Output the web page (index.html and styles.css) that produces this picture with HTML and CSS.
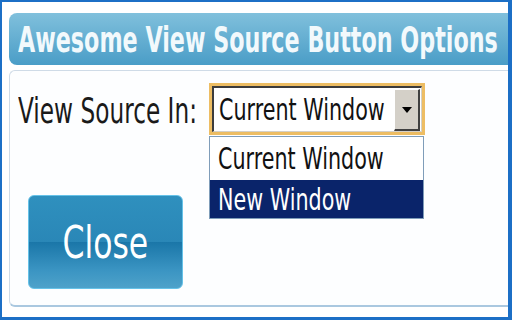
FILE: index.html
```html
<!DOCTYPE html>
<html>
<head>
<meta charset="utf-8">
<link rel="stylesheet" href="styles.css">
</head>
<body>
<div class="frame">
  <div class="header"><span class="title">Awesome View Source Button Options</span></div>
  <div class="panel">
    <div class="row">
      <div class="label"><span class="label-text">View Source In:</span></div>
      <div class="select">
        <div class="select-inner">
          <div class="select-value"><span class="sel-text">Current Window</span></div>
          <div class="select-btn"><span class="arrow"></span></div>
        </div>
        <div class="list">
          <div class="opt"><span class="sel-text">Current Window</span></div>
          <div class="opt opt-sel"><span class="sel-text">New Window</span></div>
        </div>
      </div>
    </div>
    <div class="close-btn"><span class="close-text">Close</span></div>
  </div>
</div>
</body>
</html>
```
FILE: styles.css
```css
html, body {
  margin: 0;
  padding: 0;
  overflow: hidden;
  background: #ffffff;
}
.frame {
  width: 512px;
  height: 320px;
  box-sizing: border-box;
  border-left: 2px solid #1c6fc6;
  border-top: 2px solid #1c6fc6;
  border-right: 4px solid #1c6fc6;
  border-bottom: 3px solid #1c6fc6;
  padding: 11px 0 0 7px;
  background: #ffffff;
  font-family: "DejaVu Sans", Verdana, sans-serif;
  overflow: hidden;
}
.header {
  height: 50px;
  padding-top: 2px;
  padding-left: 9px;
  border-radius: 8px 0 0 8px;
  background: linear-gradient(#80c0dc, #4a9dc7);
  white-space: nowrap;
  overflow: hidden;
}
.title {
  display: inline-block;
  font-size: 36px;
  line-height: 50px;
  font-weight: bold;
  color: #f2f9fc;
  transform: scaleX(0.618);
  transform-origin: left center;
}
.panel {
  margin-top: 5px;
  height: 237px;
  box-sizing: border-box;
  border: 1px solid #cfdbe7;
  border-right: none;
  border-bottom: 2px solid #aac8e0;
  border-radius: 6px 0 0 6px;
  background: #fdfeff;
  padding: 12px 0 0 8px;
  position: relative;
}
.row {
  display: flex;
  align-items: flex-start;
  height: 58px;
}
.label {
  width: 191px;
  flex: none;
  margin-top: 2px;
  white-space: nowrap;
}
.label-text {
  display: inline-block;
  font-size: 36px;
  line-height: 52px;
  color: #1a1a1a;
  transform: scaleX(0.645);
  transform-origin: left center;
}
.select {
  position: relative;
  flex: none;
  width: 216px;
  height: 52px;
  box-sizing: border-box;
  border: 3px solid #edbd63;
}
.select-inner {
  display: flex;
  height: 100%;
  box-sizing: border-box;
  border-top: 2px solid #3c3c3c;
  border-left: 2px solid #3c3c3c;
  border-right: 1px solid #d4d0c8;
  border-bottom: 1px solid #d4d0c8;
  background: #ffffff;
}
.select-value {
  flex: 1;
  min-width: 0;
  padding-left: 5px;
  white-space: nowrap;
}
.sel-text {
  display: inline-block;
  font-size: 31px;
  line-height: 43px;
  color: #111;
  transform: scaleX(0.667);
  transform-origin: left center;
}
.select-btn {
  flex: none;
  width: 26px;
  height: 42px;
  margin: 1px 1px 0 0;
  box-sizing: border-box;
  background: #d4d0c8;
  border-top: 1px solid #ffffff;
  border-left: 1px solid #ffffff;
  border-right: 2px solid #404040;
  border-bottom: 2px solid #404040;
  display: flex;
  align-items: center;
  justify-content: center;
}
.arrow {
  width: 0;
  height: 0;
  border-left: 5px solid transparent;
  border-right: 5px solid transparent;
  border-top: 6px solid #000;
}
.list {
  position: absolute;
  left: -3px;
  top: 50px;
  width: 215px;
  box-sizing: border-box;
  border: 1px solid #7f9db9;
  background: #ffffff;
  z-index: 2;
}
.opt {
  height: 43px;
  padding-left: 8px;
  white-space: nowrap;
}
.opt-sel {
  height: 38px;
  background: #0a246a;
}
.opt-sel .sel-text {
  line-height: 38px;
  color: #ffffff;
}
.close-btn {
  width: 155px;
  height: 94px;
  box-sizing: border-box;
  margin-left: 10px;
  margin-top: 54px;
  border: 1px solid #66c2e8;
  border-radius: 6px;
  background: linear-gradient(#2f90be 0%, #2a87b7 50%, #1a76a8 50%, #3a94c2 80%, #4ea2ca 100%);
  text-align: center;
  padding-top: 2px;
  white-space: nowrap;
}
.close-text {
  display: inline-block;
  font-size: 45px;
  line-height: 90px;
  color: #ffffff;
  transform: scaleX(0.70);
  transform-origin: center center;
}
```
